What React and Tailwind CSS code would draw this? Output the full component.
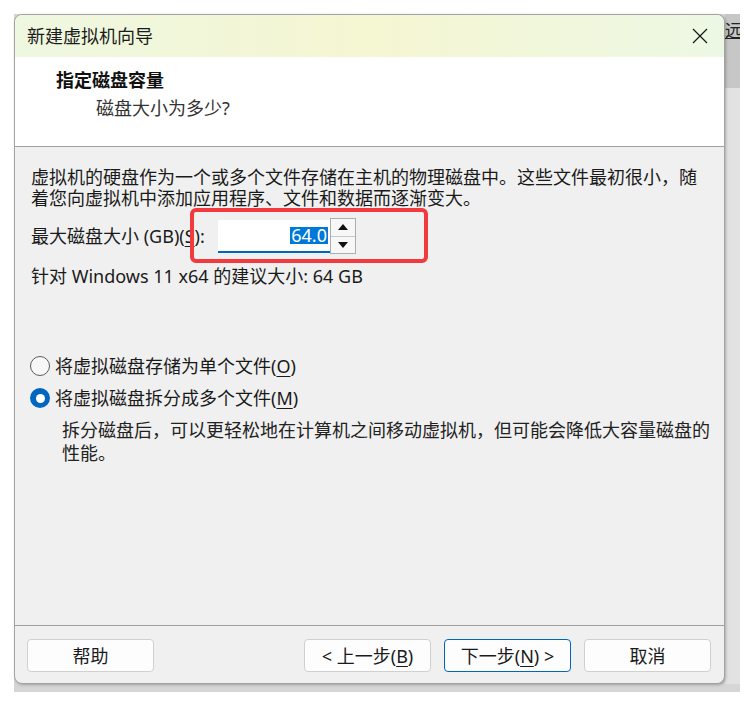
import { useState } from 'react';

const FONT = "font-['Noto_Sans','Noto_Sans_CJK_SC',sans-serif]";

const Mnemonic = ({ children }) => <span className="underline underline-offset-[3px]">{children}</span>;

const Radio = ({ checked, label, mnemonic, onClick }) => (
  <button type="button" onClick={onClick} className="flex items-center h-[22px] text-left">
    {checked ? (
      <span className="w-[20px] h-[20px] rounded-full bg-[#0067c0] flex items-center justify-center">
        <span className="w-[9px] h-[9px] rounded-full bg-white" />
      </span>
    ) : (
      <span className="w-[20px] h-[20px] rounded-full border border-[#5c5c5c] bg-[#f7f7f7]" />
    )}
    <span className="ml-[5px] leading-[22px]">
      {label}(<Mnemonic>{mnemonic}</Mnemonic>)
    </span>
  </button>
);

const WizardButton = ({ children, primary }) => (
  <button
    type="button"
    className={`w-[127px] h-[33px] rounded-[4px] bg-[#fdfdfd] text-[18px] leading-[20px] text-[#1a1a1a] border ${
      primary ? 'border-[#0067c0]' : 'border-[#d0d0d0]'
    }`}
  >
    {children}
  </button>
);

export default function App() {
  const [split, setSplit] = useState(true);

  return (
    <div className={`relative w-[754px] h-[706px] bg-white overflow-hidden text-[#1a1a1a] ${FONT}`}>
      {/* window behind + shadow */}
      <div className="absolute left-[14px] top-[14px] w-[726px] h-[678px] bg-[#d6d6d6]">
        <div className="absolute right-0 top-[74px] bottom-[8px] w-[15px] bg-[#e2e2e2]" />
        <div className="absolute right-0 top-0 w-[15px] h-[74px] bg-[#c7c7c7] overflow-hidden">
          <span className="block whitespace-nowrap text-[17px] leading-[20px] mt-[7px] underline text-[#222]">远程</span>
        </div>
      </div>

      {/* wizard window */}
      <div className="absolute left-[14px] top-[14px] w-[711px] h-[670px] rounded-[8px] border border-[#a3a3a3] bg-[#f0f0f0] overflow-hidden flex flex-col shadow-[1px_1px_3px_rgba(0,0,0,0.25)]">
        {/* title bar */}
        <div className="h-[42px] shrink-0 flex items-center justify-between pl-[12px] pr-[16px] bg-gradient-to-r from-[#eef7e0] via-[#f5f6d2] to-[#edf8e4]">
          <span className="text-[18px] leading-[22px] text-[#1b1b1b]">新建虚拟机向导</span>
          <svg width="16" height="16" viewBox="0 0 16 16" className="mb-[1px]">
            <path d="M1 1 L15 15 M15 1 L1 15" stroke="#1a1a1a" strokeWidth="1.3" fill="none" />
          </svg>
        </div>

        {/* header */}
        <div className="h-[90px] shrink-0 bg-white border-b border-[#a0a0a0] pt-[12px] pl-[41px]">
          <div className="text-[18px] leading-[22px] font-bold text-[#111]">指定磁盘容量</div>
          <div className="mt-[6px] pl-[40px] text-[18px] leading-[22px] text-[#333]">磁盘大小为多少?</div>
        </div>

        {/* body */}
        <div className="h-[478px] shrink-0 pl-[16px] pt-[20px] text-[18px]">
          <p className="leading-[21px] whitespace-nowrap">
            虚拟机的硬盘作为一个或多个文件存储在主机的物理磁盘中。这些文件最初很小，随
            <br />
            着您向虚拟机中添加应用程序、文件和数据而逐渐变大。
          </p>

          <div className="mt-[9px] h-[36px] flex items-center">
            <span className="w-[187px] leading-[21px] whitespace-nowrap">
              最大磁盘大小 (GB)(<Mnemonic>S</Mnemonic>):
            </span>
            <div className="w-[112px] h-[33px] bg-white border-b-2 border-[#0067c0] flex items-center justify-end pr-[2px]">
              <span className="bg-[#0078d7] text-white leading-[17px] px-[1px]">64.0</span>
            </div>
            <div className="w-[26px] h-[36px] border border-[#adadad] bg-[#f7f7f7] flex flex-col divide-y divide-[#c8c8c8]">
              <div className="flex-1 flex items-center justify-center">
                <svg width="10" height="6" viewBox="0 0 10 6">
                  <path d="M5 0 L10 6 L0 6 Z" fill="#111" />
                </svg>
              </div>
              <div className="flex-1 flex items-center justify-center">
                <svg width="10" height="6" viewBox="0 0 10 6">
                  <path d="M0 0 L10 0 L5 6 Z" fill="#111" />
                </svg>
              </div>
            </div>
          </div>

          <p className="mt-[12px] leading-[21px] whitespace-nowrap">针对 Windows 11 x64 的建议大小: 64 GB</p>

          <div className="mt-[68px] -ml-[1px]">
            <Radio checked={!split} label="将虚拟磁盘存储为单个文件" mnemonic="O" onClick={() => setSplit(false)} />
          </div>
          <div className="mt-[10px] -ml-[1px]">
            <Radio checked={split} label="将虚拟磁盘拆分成多个文件" mnemonic="M" onClick={() => setSplit(true)} />
          </div>
          <p className="mt-[10px] pl-[31px] leading-[23px] whitespace-nowrap text-[#222]">
            拆分磁盘后，可以更轻松地在计算机之间移动虚拟机，但可能会降低大容量磁盘的
            <br />
            性能。
          </p>
        </div>

        {/* footer */}
        <div className="flex-1 border-t border-[#a0a0a0] pt-[13px] pl-[12px] pr-[13px] flex items-start">
          <WizardButton>帮助</WizardButton>
          <div className="ml-auto flex gap-[13px]">
            <WizardButton>
              &lt; 上一步(<Mnemonic>B</Mnemonic>)
            </WizardButton>
            <WizardButton primary>
              下一步(<Mnemonic>N</Mnemonic>) &gt;
            </WizardButton>
            <WizardButton>取消</WizardButton>
          </div>
        </div>
      </div>

      {/* red annotation box */}
      <div className="absolute left-[190px] top-[208px] w-[238px] h-[55px] border-[4px] border-[#f03a3e] rounded-[6px]" />
    </div>
  );
}
